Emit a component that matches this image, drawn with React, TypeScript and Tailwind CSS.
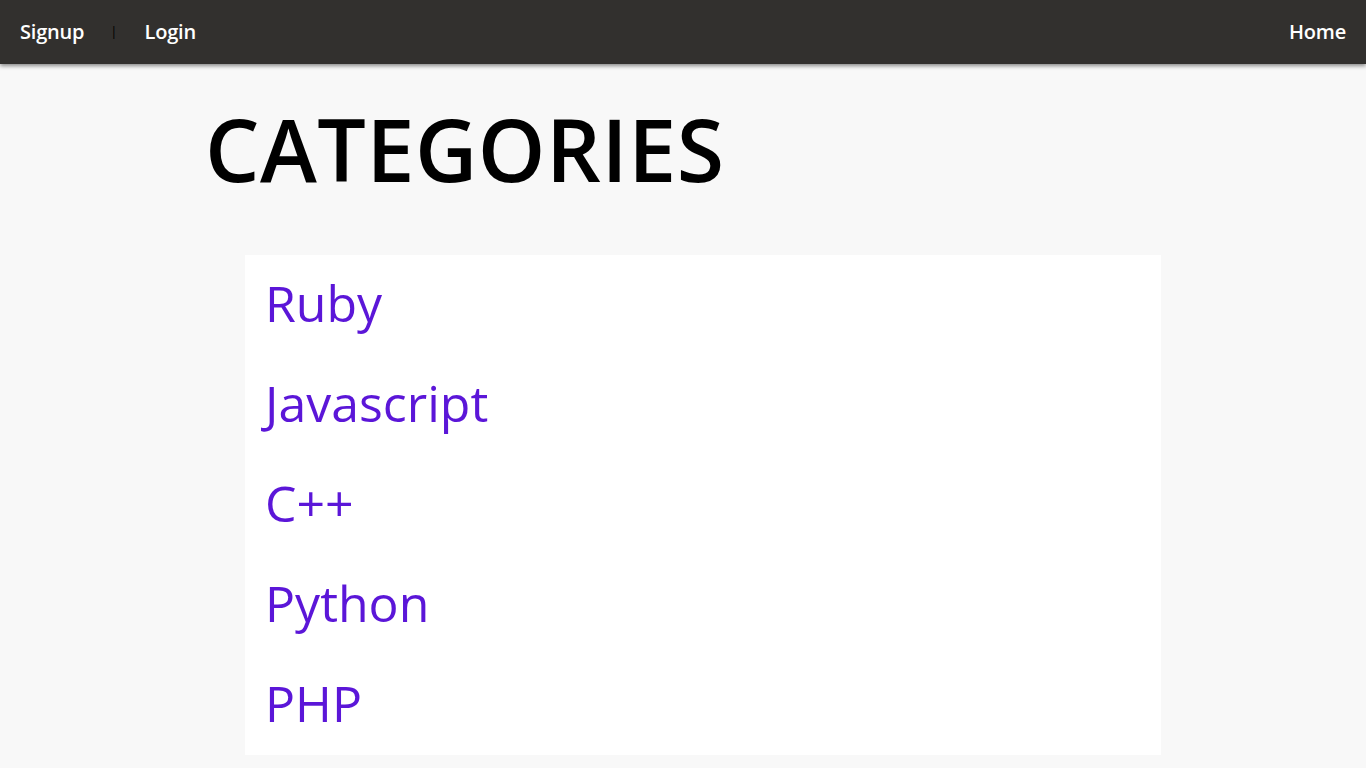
export default function App() {
  const categories = ['Ruby', 'Javascript', 'C++', 'Python', 'PHP'];

  return (
    <div className="min-h-screen bg-[#f8f8f8] font-['Open_Sans',sans-serif]">
      {/* Navbar */}
      <nav className="h-16 bg-[#32302e] shadow-[0_2px_4px_rgba(0,0,0,0.45)] flex items-center justify-between px-5">
        <div className="flex items-center">
          <a href="#" className="text-white text-[20px] font-semibold tracking-[-0.2px]">Signup</a>
          <span className="ml-[26px] mr-[27px] text-black text-[13px]">|</span>
          <a href="#" className="text-white text-[20px] font-semibold tracking-[-0.2px]">Login</a>
        </div>
        <a href="#" className="text-white text-[20px] font-semibold tracking-[-0.2px]">Home</a>
      </nav>

      <main className="w-[956px] mx-auto">
        <h1 className="text-black text-[86px] font-semibold leading-none pt-[42px] tracking-[0.5px]">CATEGORIES</h1>

        <ul className="mt-[63px] ml-[40px] w-[916px] bg-white">
          {categories.map(c => (
            <li key={c} className="h-[100px] flex items-center pl-5 pb-[5px]">
              <a href="#" className="text-[#5b16d8] text-[50px] leading-none">{c}</a>
            </li>
          ))}
        </ul>
      </main>
    </div>
  );
}
